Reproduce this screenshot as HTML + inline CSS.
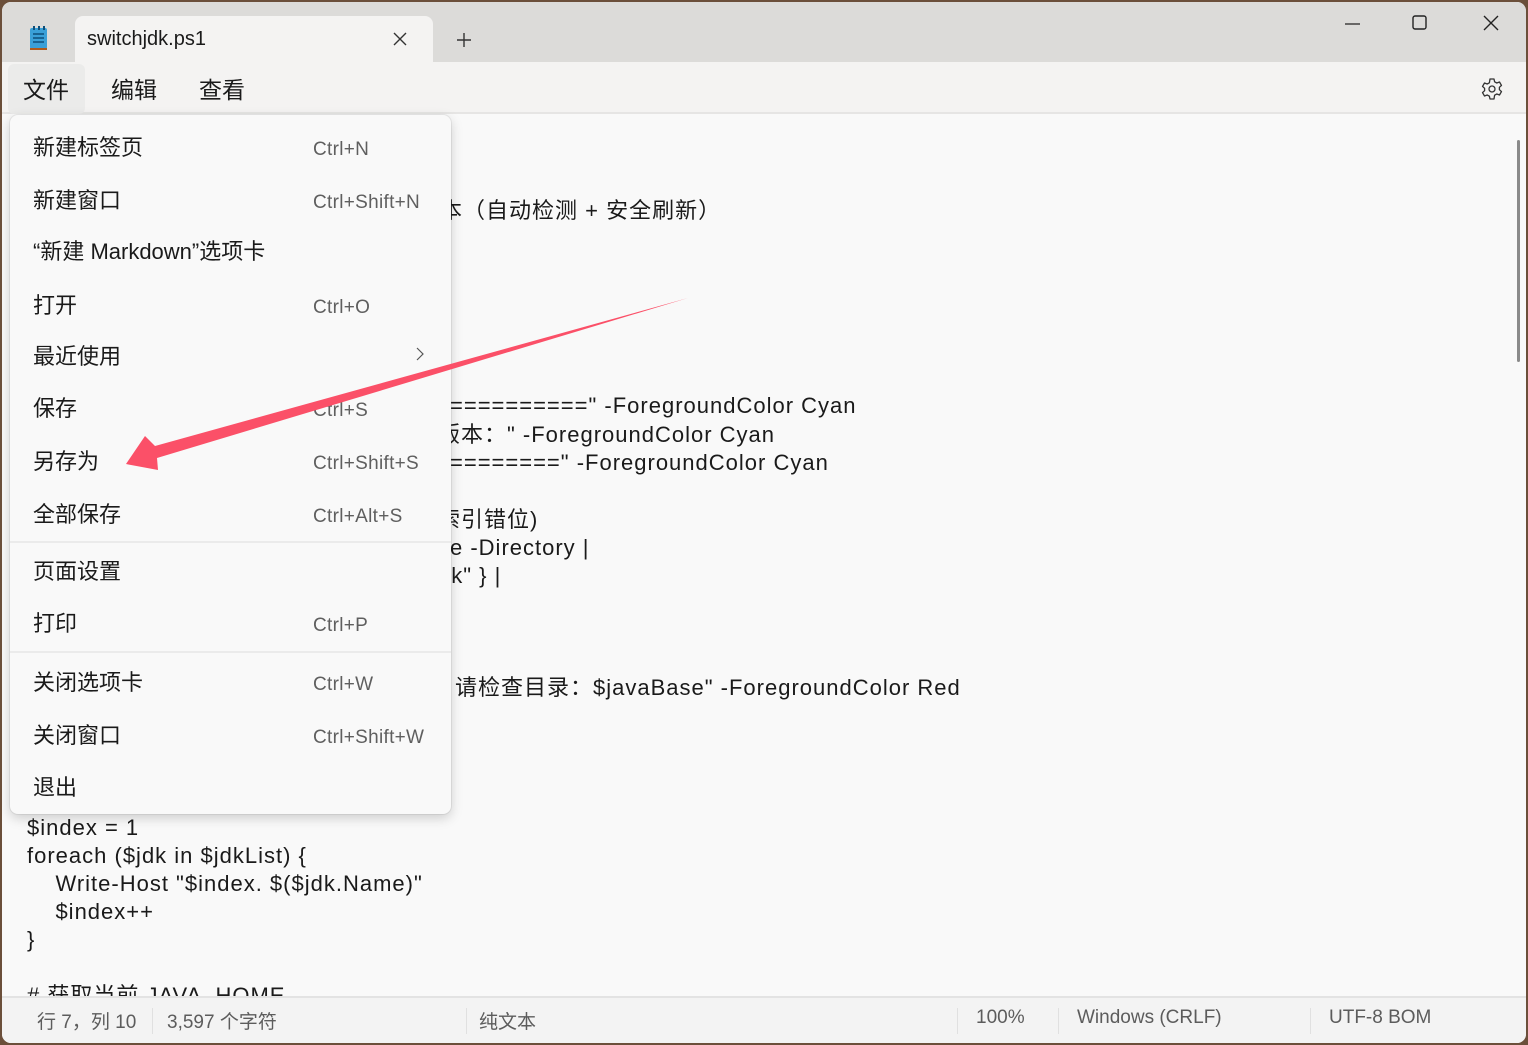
<!DOCTYPE html>
<html><head><meta charset="utf-8"><style>
*{margin:0;padding:0;box-sizing:border-box}
body{width:1528px;height:1045px;background:#6b4f3a;position:relative;overflow:hidden;font-family:"Liberation Sans","Noto Sans CJK SC",sans-serif;color:#1a1a1a}
.win{position:absolute;left:2px;top:2px;width:1524px;height:1041px;border-radius:9px;overflow:hidden;background:#f9f9f9}
.title{position:absolute;left:0;top:0;width:100%;height:60px;background:#dcdbd9}
.tab{position:absolute;left:73px;top:14px;width:358px;height:50px;background:#f4f3f2;border-radius:8px 8px 0 0}
.menubar{position:absolute;left:0;top:60px;width:100%;height:52px;background:#f4f3f2;border-bottom:2px solid #e6e5e4}
.mb{position:absolute;top:9px;font-size:23px}
.editor{position:absolute;left:0;top:114px;width:100%;height:880px;background:#f9f9f9}
.code{position:absolute;font-size:22px;white-space:pre;line-height:28px;letter-spacing:1px}
.status{position:absolute;left:0;top:994px;width:100%;height:47px;background:#f3f3f3;border-top:2px solid #e3e3e3;font-size:19px;color:#5c5c5c}
.status span{position:absolute;top:9px}
.sep{position:absolute;top:10px;width:1px;height:26px;background:#e0e0e0}
.menu{position:absolute;left:8px;top:113px;width:441px;height:699px;background:#f9f9f9;border-radius:8px;box-shadow:0 4px 12px rgba(0,0,0,.18),0 0 0 1px rgba(0,0,0,.06)}
.mi{position:absolute;left:23px;font-size:22px;margin-top:-3px}
.sc{position:absolute;left:303px;font-size:19px;color:#5f5f5f;margin-top:3px;letter-spacing:.3px}
.hr{position:absolute;left:0;width:441px;height:2px;background:#ebebeb}
</style></head><body>
<div class="win">
<div class="title">
 <svg style="position:absolute;left:27px;top:24px" width="20" height="26" viewBox="0 0 20 26"><rect x="1" y="2" width="17" height="21" rx="2" fill="#3aa0d8"/><rect x="1" y="22" width="17" height="2" fill="#b05a1c"/><g stroke="#0d4f7a" stroke-width="1.6"><line x1="4" y1="8" x2="15" y2="8"/><line x1="4" y1="12" x2="15" y2="12"/><line x1="4" y1="16" x2="15" y2="16"/></g><g fill="#0d4f7a"><rect x="4" y="0" width="2" height="4"/><rect x="9" y="0" width="2" height="4"/><rect x="14" y="0" width="2" height="4"/></g></svg>
 <div class="tab"><span style="position:absolute;left:12px;top:12px;font-size:20px">switchjdk.ps1</span>
 <svg style="position:absolute;left:318px;top:16px" width="14" height="14"><path d="M1 1L13 13M13 1L1 13" stroke="#333" stroke-width="1.4"/></svg></div>
 <svg style="position:absolute;left:454px;top:30px" width="16" height="16"><path d="M8 1V15M1 8H15" stroke="#333" stroke-width="1.4"/></svg>
 <svg style="position:absolute;left:1343px;top:20px" width="16" height="4"><path d="M0 2H15" stroke="#222" stroke-width="1.3"/></svg>
 <svg style="position:absolute;left:1410px;top:13px" width="16" height="16"><rect x="1" y="1" width="13" height="13" rx="2" fill="none" stroke="#222" stroke-width="1.4"/></svg>
 <svg style="position:absolute;left:1481px;top:13px" width="16" height="16"><path d="M1 1L15 15M15 1L1 15" stroke="#222" stroke-width="1.4"/></svg>
</div>
<div class="menubar">
 <div style="position:absolute;left:6px;top:2px;width:77px;height:50px;background:#ebebea;border-radius:6px"></div>
 <span class="mb" style="left:21px">文件</span><span class="mb" style="left:109px">编辑</span><span class="mb" style="left:197px">查看</span>
 <svg style="position:absolute;left:1478px;top:15px" width="24" height="24" viewBox="0 0 24 24"><path d="M10 2h4l.6 2.8 2.2 1.2 2.7-1 2 3.4-2.1 1.9v2.4l2.1 1.9-2 3.4-2.7-1-2.2 1.2L14 22h-4l-.6-2.8-2.2-1.2-2.7 1-2-3.4 2.1-1.9V11.3L2.5 9.4l2-3.4 2.7 1 2.2-1.2z" fill="none" stroke="#333" stroke-width="1.3" stroke-linejoin="round"/><circle cx="12" cy="12" r="3" fill="none" stroke="#333" stroke-width="1.3"/></svg>
</div>
<div class="editor">
 <div style="position:absolute;right:6px;top:24px;width:3px;height:222px;background:#8a8a8a;border-radius:2px"></div>
</div>
<div class="code" style="left:438px;top:195px">本（自动检测 + 安全刷新）</div>
<div class="code" style="left:448px;top:390px">==========" -ForegroundColor Cyan</div>
<div class="code" style="left:436px;top:419px">版本：" -ForegroundColor Cyan</div>
<div class="code" style="left:448px;top:447px">========" -ForegroundColor Cyan</div>
<div class="code" style="left:436px;top:504px">索引错位)</div>
<div class="code" style="left:436px;top:532px">ze -Directory |</div>
<div class="code" style="left:436px;top:560px">dk" } |</div>
<div class="code" style="left:430px;top:672px">，请检查目录：$javaBase" -ForegroundColor Red</div>
<div class="code" style="left:25px;top:812px">$index = 1
foreach ($jdk in $jdkList) {
    Write-Host "$index. $($jdk.Name)"
    $index++
}

# 获取当前 JAVA_HOME</div>
<div class="status">
 <span style="left:35px">行 7，列 10</span><div class="sep" style="left:150px"></div>
 <span style="left:165px">3,597 个字符</span><div class="sep" style="left:464px"></div>
 <span style="left:477px">纯文本</span><div class="sep" style="left:955px"></div>
 <span style="left:974px">100%</span><div class="sep" style="left:1056px"></div>
 <span style="left:1075px">Windows (CRLF)</span><div class="sep" style="left:1308px"></div>
 <span style="left:1327px">UTF-8 BOM</span>
</div>
<div class="menu">
 <span class="mi" style="top:18px">新建标签页</span><span class="sc" style="top:21px">Ctrl+N</span>
 <span class="mi" style="top:71px">新建窗口</span><span class="sc" style="top:74px">Ctrl+Shift+N</span>
 <span class="mi" style="top:122px">“新建 Markdown”选项卡</span>
 <span class="mi" style="top:176px">打开</span><span class="sc" style="top:179px">Ctrl+O</span>
 <span class="mi" style="top:227px">最近使用</span>
 <svg style="position:absolute;left:405px;top:231px" width="10" height="16"><path d="M2 2L8 8L2 14" fill="none" stroke="#555" stroke-width="1.2"/></svg>
 <span class="mi" style="top:279px">保存</span><span class="sc" style="top:282px">Ctrl+S</span>
 <span class="mi" style="top:332px">另存为</span><span class="sc" style="top:335px">Ctrl+Shift+S</span>
 <span class="mi" style="top:385px">全部保存</span><span class="sc" style="top:388px">Ctrl+Alt+S</span>
 <div class="hr" style="top:426px"></div>
 <span class="mi" style="top:442px">页面设置</span>
 <span class="mi" style="top:494px">打印</span><span class="sc" style="top:497px">Ctrl+P</span>
 <div class="hr" style="top:536px"></div>
 <span class="mi" style="top:553px">关闭选项卡</span><span class="sc" style="top:556px">Ctrl+W</span>
 <span class="mi" style="top:606px">关闭窗口</span><span class="sc" style="top:609px">Ctrl+Shift+W</span>
 <span class="mi" style="top:658px">退出</span>
</div>
</div>
<svg style="position:absolute;left:0;top:0" width="1528" height="1045"><polygon points="688,298 155,446 145,436 126,464 158,470 157,458" fill="#fb5068"/></svg>
</body></html>
